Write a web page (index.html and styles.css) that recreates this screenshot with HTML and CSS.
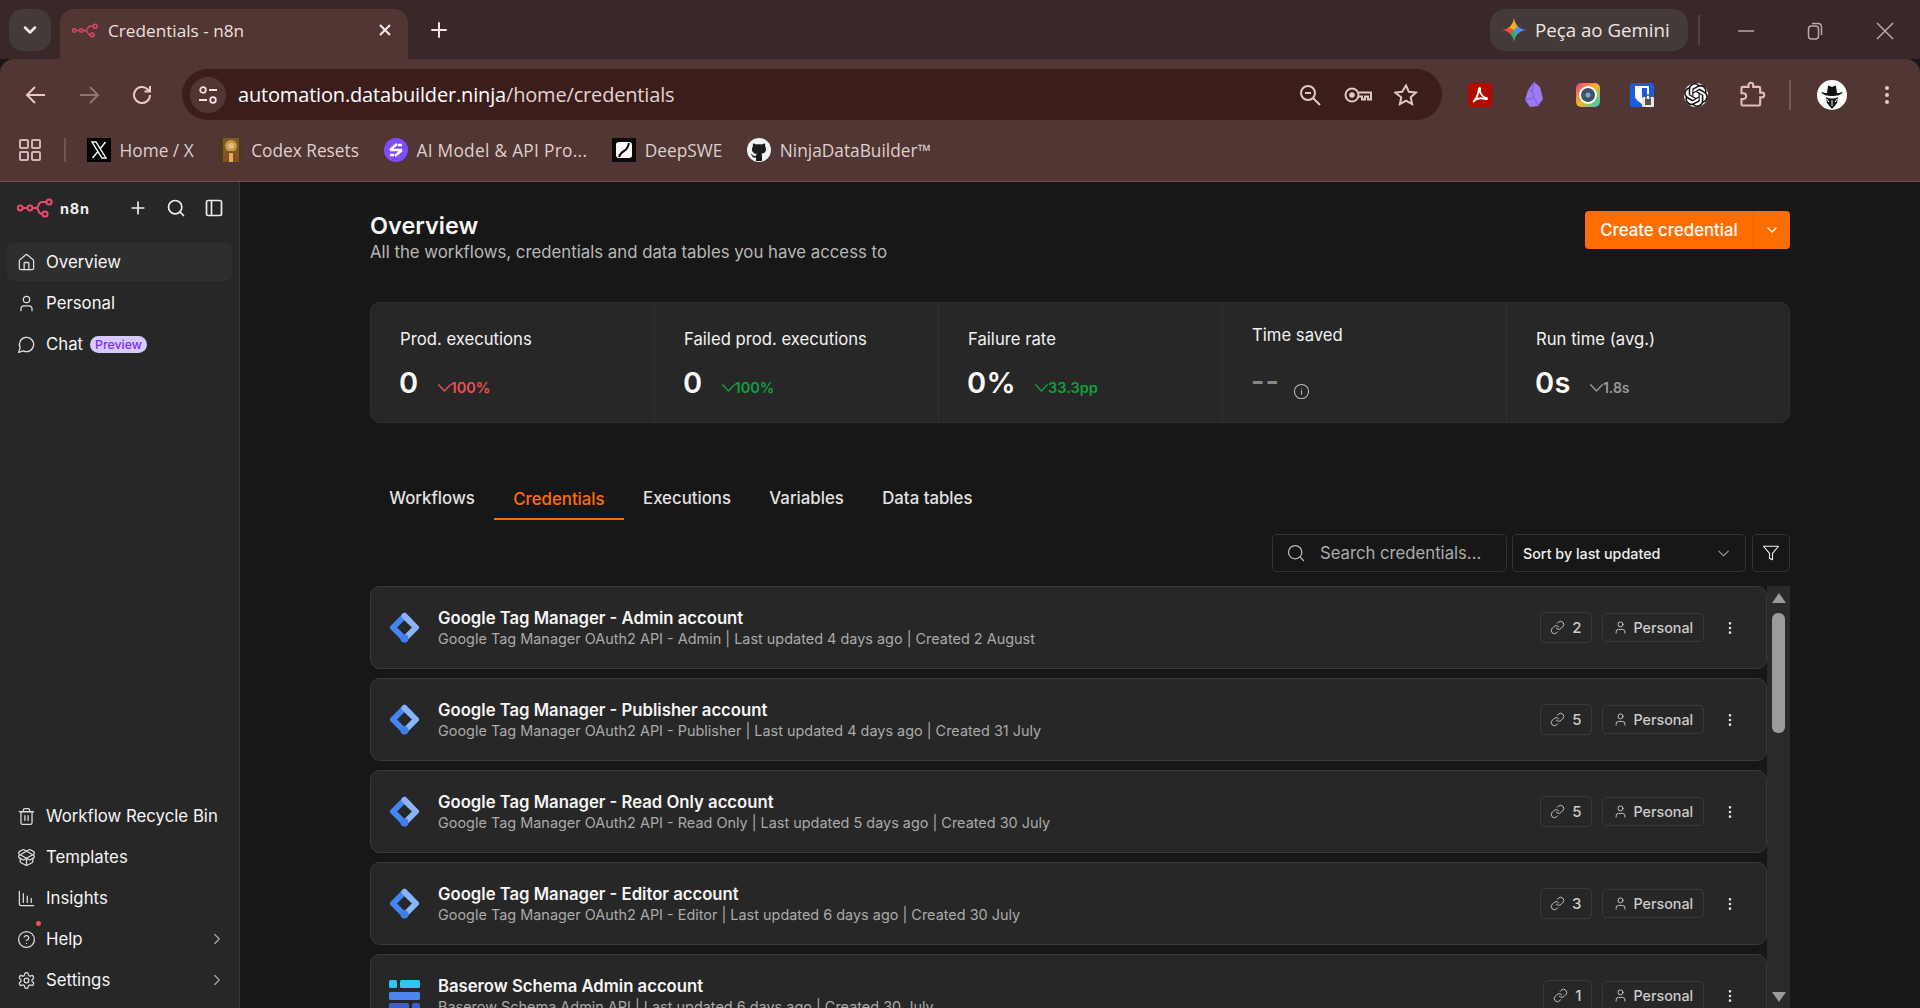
FILE: index.html
```html
<!DOCTYPE html>
<html lang="en">
<head>
<meta charset="utf-8">
<title>Credentials - n8n</title>
<link rel="stylesheet" href="styles.css">
</head>
<body>
<svg class="sprite" aria-hidden="true">
  <symbol id="n8n" viewBox="0 0 36 20"><g fill="none" stroke="currentColor" stroke-width="2"><circle cx="3.2" cy="10" r="2.4"/><circle cx="13" cy="10" r="2.4"/><circle cx="32" cy="4" r="2.6"/><circle cx="28" cy="16" r="2.6"/><path d="M5.6 10h5M15.4 10h3.2c2 0 2.4-1 3-3 .6-2 1.4-3 3.4-3h4.4M18.6 10c2 0 2.400 1 3 3 .6 2 1.600 3 3.800 3"/></g></symbol>
  <symbol id="i-home" viewBox="0 0 24 24"><path d="M15 21v-8a1 1 0 0 0-1-1h-4a1 1 0 0 0-1 1v8"/><path d="M3 10a2 2 0 0 1 .709-1.528l7-5.999a2 2 0 0 1 2.582 0l7 5.999A2 2 0 0 1 21 10v9a2 2 0 0 1-2 2H5a2 2 0 0 1-2-2z"/></symbol>
  <symbol id="i-user" viewBox="0 0 24 24"><path d="M19 21v-2a4 4 0 0 0-4-4H9a4 4 0 0 0-4 4v2"/><circle cx="12" cy="7" r="4"/></symbol>
  <symbol id="i-chat" viewBox="0 0 24 24"><path d="M7.900 20A9 9 0 1 0 4 16.100L2 22Z"/></symbol>
  <symbol id="i-trash" viewBox="0 0 24 24"><path d="M3 6h18M19 6v14c0 1-1 2-2 2H7c-1 0-2-1-2-2V6M8 6V4c0-1 1-2 2-2h4c1 0 2 1 2 2v2M10 11v6M14 11v6"/></symbol>
  <symbol id="i-box" viewBox="0 0 24 24"><path d="M12 22v-9"/><path d="M15.170 2.210a1.670 1.670 0 0 1 1.630 0L21 4.570a1.930 1.930 0 0 1 0 3.360L8.820 14.790a1.655 1.655 0 0 1-1.640 0L3 12.430a1.930 1.930 0 0 1 0-3.360z"/><path d="M20 13v3.870a2.060 2.060 0 0 1-1.110 1.830l-6 3.080a1.930 1.930 0 0 1-1.780 0l-6-3.080A2.060 2.060 0 0 1 4 16.870V13"/><path d="M21 12.430a1.930 1.930 0 0 0 0-3.360L8.830 2.200a1.640 1.640 0 0 0-1.630 0L3 4.570a1.930 1.930 0 0 0 0 3.360l12.180 6.860a1.636 1.636 0 0 0 1.630 0z"/></symbol>
  <symbol id="i-chart" viewBox="0 0 24 24"><path d="M3 3v16a2 2 0 0 0 2 2h16M8 17V6M13 17v-8M18 17v-5"/></symbol>
  <symbol id="i-help" viewBox="0 0 24 24"><circle cx="12" cy="12" r="10"/><path d="M9.090 9a3 3 0 0 1 5.830 1c0 2-3 3-3 3M12 17h.01"/></symbol>
  <symbol id="i-gear" viewBox="0 0 24 24"><path d="M12.220 2h-.44a2 2 0 0 0-2 2v.18a2 2 0 0 1-1 1.730l-.43.25a2 2 0 0 1-2 0l-.15-.08a2 2 0 0 0-2.730.73l-.22.38a2 2 0 0 0 .73 2.730l.15.1a2 2 0 0 1 1 1.720v.51a2 2 0 0 1-1 1.740l-.15.09a2 2 0 0 0-.73 2.730l.22.38a2 2 0 0 0 2.730.73l.15-.08a2 2 0 0 1 2 0l.43.25a2 2 0 0 1 1 1.730V20a2 2 0 0 0 2 2h.44a2 2 0 0 0 2-2v-.18a2 2 0 0 1 1-1.730l.43-.25a2 2 0 0 1 2 0l.15.08a2 2 0 0 0 2.730-.73l.22-.39a2 2 0 0 0-.73-2.730l-.15-.08a2 2 0 0 1-1-1.740v-.5a2 2 0 0 1 1-1.740l.15-.09a2 2 0 0 0 .73-2.730l-.22-.38a2 2 0 0 0-2.730-.73l-.15.08a2 2 0 0 1-2 0l-.43-.25a2 2 0 0 1-1-1.730V4a2 2 0 0 0-2-2z"/><circle cx="12" cy="12" r="3"/></symbol>
  <symbol id="i-right" viewBox="0 0 24 24"><path d="m9 18 6-6-6-6"/></symbol>
  <symbol id="i-down" viewBox="0 0 24 24"><path d="m6 9 6 6 6-6"/></symbol>
  <symbol id="i-vee" viewBox="0 0 13 8"><path d="M.7.7 6.500 7 12.300.7"/></symbol>
  <symbol id="i-plus" viewBox="0 0 24 24"><path d="M5 12h14M12 5v14"/></symbol>
  <symbol id="i-search" viewBox="0 0 24 24"><circle cx="11" cy="11" r="8"/><path d="m21 21-4.300-4.300"/></symbol>
  <symbol id="i-panel" viewBox="0 0 24 24"><rect x="3" y="3" width="18" height="18" rx="2"/><path d="M9 3v18"/></symbol>
  <symbol id="i-funnel" viewBox="0 0 24 24"><path d="M22 3H2l8 9.460V19l4 2v-8.540z"/></symbol>
  <symbol id="i-link" viewBox="0 0 24 24"><path d="M10 13a5 5 0 0 0 7.540.54l3-3a5 5 0 0 0-7.070-7.070l-1.720 1.710"/><path d="M14 11a5 5 0 0 0-7.540-.54l-3 3a5 5 0 0 0 7.070 7.070l1.710-1.710"/></symbol>
  <symbol id="i-dots" viewBox="0 0 24 24"><circle cx="12" cy="5" r="1"/><circle cx="12" cy="12" r="1"/><circle cx="12" cy="19" r="1"/></symbol>
  <symbol id="i-info" viewBox="0 0 24 24"><circle cx="12" cy="12" r="10"/><path d="M12 16v-5M12 8h.01"/></symbol>
  <symbol id="gtm" viewBox="0 0 31 31"><path d="M15.500 4 27 15.500 15.500 27" fill="none" stroke="#8ab4f8" stroke-width="6" stroke-linejoin="round" stroke-linecap="round"/><path d="M15.500 4 4 15.500 15.500 27" fill="none" stroke="#4285f4" stroke-width="6" stroke-linejoin="round" stroke-linecap="round"/><path d="M15.500 4 21 9.500" fill="none" stroke="#8ab4f8" stroke-width="6" stroke-linecap="round"/><circle cx="15.500" cy="26.500" r="4" fill="#3f7fe8"/></symbol>
</svg>

<div class="app">
  <header class="tabstrip">
    <button class="tab-menu"><svg class="ic ic-strong" width="20" height="20"><use href="#i-down"/></svg></button>
    <div class="tab">
      <svg class="tab-fav" width="26" height="15"><use href="#n8n"/></svg>
      <span class="tab-title">Credentials - n8n</span>
      <svg class="tab-close" width="12" height="12" viewBox="0 0 12 12"><path d="m1 1 10 10M11 1 1 11"/></svg>
    </div>
    <svg class="ic new-tab" width="24" height="24"><use href="#i-plus"/></svg>
    <div class="tab-spacer"></div>
    <div class="gemini">
      <span class="gem-star"></span>
      <span class="gem-label">Peça ao Gemini</span>
    </div>
    <span class="win-sep"></span>
    <div class="win-btns">
      <svg width="16" height="16" viewBox="0 0 16 16"><path d="M0 8h16"/></svg>
      <svg width="16" height="20" viewBox="0 0 16 20"><rect x="1.500" y="5" width="10" height="13" rx="3"/><path d="M5 2.500h6c2 0 3.500 1.500 3.500 3.500v8"/></svg>
      <svg width="18" height="18" viewBox="0 0 18 18"><path d="m1 1 16 16M17 1 1 17"/></svg>
    </div>
  </header>

  <div class="toolbar">
    <div class="nav-row">
      <div class="nav-btns">
        <svg class="nav-ic" width="24" height="24" viewBox="0 0 24 24"><path d="M21 12H4M11 4l-8 8 8 8"/></svg>
        <svg class="nav-ic nav-off" width="24" height="24" viewBox="0 0 24 24"><path d="M3 12h17M13 4l8 8-8 8"/></svg>
        <svg class="nav-ic" width="24" height="24" viewBox="0 0 24 24"><path d="M20 12a8 8 0 1 1-2.400-5.700L20 8.500M20 3v5.500h-5.500"/></svg>
      </div>
      <div class="omnibox">
        <span class="site-btn"><svg width="20" height="20" viewBox="0 0 20 20"><circle cx="5" cy="5" r="2.800"/><path d="M11 5h8M1 15h8"/><circle cx="15" cy="15" r="2.800"/></svg></span>
        <span class="url"><b>automation.databuilder.ninja</b>/home/credentials</span>
        <div class="omni-icons">
          <svg width="24" height="24" viewBox="0 0 24 24"><circle cx="10" cy="10" r="7"/><path d="M7 10h6M15 15l7 7"/></svg>
          <svg width="28" height="24" viewBox="0 0 28 24"><circle cx="8" cy="12" r="6.500"/><circle cx="8" cy="12" r="1.800" class="fill"/><path d="M14.500 9.500H27v7h-3v-3h-3v3h-3v-3h-3.500"/></svg>
          <svg width="24" height="24" viewBox="0 0 24 24"><path d="m12 2.500 2.900 6.300 6.900.8-5.100 4.700 1.400 6.800-6.100-3.400-6.100 3.400 1.400-6.800L1.200 9.600l6.900-.8z"/></svg>
        </div>
      </div>
      <div class="ext-row">
        <svg width="24" height="24" viewBox="0 0 24 24"><rect width="24" height="24" rx="3" fill="#b30b00"/><path d="M5 19c3-2 5-7 6-13 .3-2 1.700-1 1 1-.6 2 2 7 6 8 2 .4 1 1.800-1 1-3-1-7-1-10 1" fill="none" stroke="#fff" stroke-width="1.800"/></svg>
        <svg class="ext-obsidian" width="18" height="25" viewBox="0 0 18 25"><path d="M9 0l6 5 3 12-5 7-8 1-5-7 3-10z" fill="#9b7cf0"/><path d="M9 0 7 9l2 7 5 8M3 8l4 1M0 18l9-2" stroke="#7a5cd6" fill="none"/></svg>
        <svg width="24" height="24" viewBox="0 0 24 24"><defs><linearGradient id="cam" x1="0" y1="0" x2="1" y2="1"><stop offset="0" stop-color="#f0388a"/><stop offset=".5" stop-color="#f5b81f"/><stop offset="1" stop-color="#22c8d8"/></linearGradient></defs><rect width="24" height="24" rx="5" fill="url(#cam)"/><circle cx="12" cy="12" r="9" fill="#fff"/><circle cx="12" cy="12" r="7" fill="#3c5468"/><circle cx="12" cy="12" r="2.500" fill="#8aa6bc"/></svg>
        <svg width="24" height="24" viewBox="0 0 24 24"><rect width="24" height="24" rx="2" fill="#175ddc"/><path d="M5 3h14v10c0 3-4 6-7 8-3-2-7-5-7-8z" fill="#fff"/><path d="M12 5h5v8c0 2-3 4-5 5.500z" fill="#175ddc"/><rect x="12" y="14" width="12" height="10" rx="1" fill="#e8e8e8"/><rect x="15" y="16" width="6" height="6" fill="#555"/><path d="M16 16v-2a2 2 0 0 1 4 0v2" fill="none" stroke="#555" stroke-width="1.300"/></svg>
        <svg width="24" height="24" viewBox="0 0 24 24"><circle cx="12" cy="12" r="12" fill="#fff"/><path fill="#111" d="M22.282 9.821a5.985 5.985 0 0 0-.516-4.910 6.046 6.046 0 0 0-6.510-2.900A6.065 6.065 0 0 0 4.981 4.180a5.985 5.985 0 0 0-3.998 2.900 6.046 6.046 0 0 0 .743 7.097 5.980 5.980 0 0 0 .510 4.911 6.051 6.051 0 0 0 6.515 2.900A5.985 5.985 0 0 0 13.260 24a6.056 6.056 0 0 0 5.772-4.206 5.990 5.990 0 0 0 3.997-2.900 6.056 6.056 0 0 0-.747-7.073zM13.260 22.430a4.476 4.476 0 0 1-2.876-1.040l.141-.081 4.779-2.758a.795.795 0 0 0 .392-.681v-6.737l2.020 1.168a.071.071 0 0 1 .038.052v5.583a4.504 4.504 0 0 1-4.494 4.494zM3.600 18.304a4.470 4.470 0 0 1-.535-3.014l.142.085 4.783 2.759a.771.771 0 0 0 .780 0l5.843-3.369v2.332a.080.080 0 0 1-.033.062L9.740 19.950a4.500 4.500 0 0 1-6.140-1.646zM2.340 7.896a4.485 4.485 0 0 1 2.366-1.973V11.600a.766.766 0 0 0 .388.676l5.815 3.355-2.020 1.168a.076.076 0 0 1-.071 0l-4.830-2.786A4.504 4.504 0 0 1 2.340 7.872zm16.597 3.855l-5.833-3.387L15.119 7.200a.076.076 0 0 1 .071 0l4.830 2.791a4.494 4.494 0 0 1-.676 8.105v-5.678a.790.790 0 0 0-.407-.667zm2.010-3.023l-.141-.085-4.774-2.782a.776.776 0 0 0-.785 0L9.409 9.230V6.897a.066.066 0 0 1 .028-.061l4.830-2.787a4.500 4.500 0 0 1 6.680 4.660zm-12.640 4.135l-2.020-1.164a.080.080 0 0 1-.038-.057V6.075a4.500 4.500 0 0 1 7.375-3.453l-.142.080L8.704 5.460a.795.795 0 0 0-.393.681zm1.097-2.365l2.602-1.500 2.607 1.500v2.999l-2.597 1.500-2.607-1.500Z"/></svg>
        <svg class="puzzle" width="28" height="28" viewBox="0 0 24 24"><path d="M4 5h5V3.500a2 2 0 0 1 4 0V5h5a1 1 0 0 1 1 1v4h1.500a2 2 0 0 1 0 4H19v6a1 1 0 0 1-1 1H4a1 1 0 0 1-1-1v-4.500h1.500a2.500 2.500 0 0 0 0-5H3V6a1 1 0 0 1 1-1z"/></svg>
        <span class="ext-sep"></span>
        <svg class="avatar" width="30" height="30" viewBox="0 0 30 30"><circle cx="15" cy="15" r="15" fill="#fff"/><path d="M4 12c3 1 5 1 6 1l1-7c2-1 3 1 4 1s2-2 4-1l1 7c1 0 3 0 6-1-2 3-6 4-11 4S6 15 4 12z" fill="#111"/><path d="M9 17c3 2 9 2 12 0l-1 6-5 6-5-6z" fill="#111"/><path d="M10 19l2 3M20 19l-2 3M15 20v6" stroke="#fff"/></svg>
        <svg class="kebab" width="24" height="24"><use href="#i-dots"/></svg>
      </div>
    </div>
    <nav class="bookmarks">
      <svg class="apps" width="24" height="24" viewBox="0 0 24 24"><rect x="2" y="2" width="8" height="8" rx="1"/><rect x="14" y="2" width="8" height="8" rx="1"/><rect x="2" y="14" width="8" height="8" rx="1"/><rect x="14" y="14" width="8" height="8" rx="1"/></svg>
      <span class="bm-sep"></span>
      <a class="bm"><svg width="24" height="24" viewBox="0 0 24 24"><rect width="24" height="24" fill="#000"/><path d="M5 4h4l10 16h-4zM18.500 4 13 11M11 13.500 5.500 20" fill="none" stroke="#fff" stroke-width="1.400"/></svg><span>Home / X</span></a>
      <a class="bm"><svg width="24" height="24" viewBox="0 0 24 24"><rect width="24" height="24" fill="#7a5a2a"/><circle cx="12" cy="8" r="6" fill="#c79a3c"/><circle cx="12" cy="8" r="3" fill="#e2b98a"/><path d="M5 24c0-8 3-11 7-11s7 3 7 11z" fill="#8c4a22"/><path d="M10 15h4v9h-4z" fill="#d8b060"/><path d="M0 0h4v24H0zM20 0h4v24h-4z" fill="#4c3a1e"/></svg><span>Codex Resets</span></a>
      <a class="bm bm-wide"><svg width="24" height="24" viewBox="0 0 24 24"><circle cx="12" cy="12" r="12" fill="#7c4dff"/><path d="M6 12 13 6M11 18l7-6M6 12h12M6 17h4M14 7h4" stroke="#fff" stroke-width="2.400" fill="none"/></svg><span>AI Model &amp; API Pro...</span></a>
      <a class="bm"><svg width="24" height="24" viewBox="0 0 24 24"><rect width="24" height="24" fill="#0a0a0a"/><rect x="4" y="4" width="16" height="16" rx="3" fill="#fff"/><path d="M17 5c-1 5-3 7-5 8s-4 3-5 6" fill="none" stroke="#0a0a0a" stroke-width="2"/></svg><span>DeepSWE</span></a>
      <a class="bm"><svg width="24" height="24" viewBox="0 0 24 24"><circle cx="12" cy="12" r="12" fill="#f2f2f2"/><path d="M9 23v-3.500c-3 .6-4-1-4.500-2.500-.3-.7-1-1.100-1-1.300 1 0 1.700.9 2.200 1.600.7 1 2 1 3.300.4.100-.9.400-1.500.8-1.900C7 15.400 5 14.300 5 10.900c0-1.100.4-2 1-2.700-.1-.3-.4-1.300.1-2.700 0 0 1-.3 3 1 1.800-.5 4-.5 5.800 0 2-1.300 3-1 3-1 .5 1.400.2 2.400.1 2.700.6.700 1 1.600 1 2.700 0 3.400-2 4.500-4.800 4.800.5.400.8 1.100.8 2.300V23z" fill="#1a1a1a"/></svg><span>NinjaDataBuilder™</span></a>
    </nav>
  </div>

  <div class="workspace">
    <aside class="sidebar">
      <div class="side-top">
        <svg class="logo" width="36" height="20"><use href="#n8n"/></svg>
        <span class="logo-text">n8n</span>
        <div class="side-actions">
          <svg class="ic" width="20" height="20"><use href="#i-plus"/></svg>
          <svg class="ic" width="20" height="20"><use href="#i-search"/></svg>
          <svg class="ic" width="20" height="20"><use href="#i-panel"/></svg>
        </div>
      </div>
      <ul class="side-menu">
        <li class="side-item is-current"><svg class="ic" width="19" height="19"><use href="#i-home"/></svg><span>Overview</span></li>
        <li class="side-item"><svg class="ic" width="19" height="19"><use href="#i-user"/></svg><span>Personal</span></li>
        <li class="side-item"><svg class="ic" width="19" height="19"><use href="#i-chat"/></svg><span>Chat</span><em class="preview">Preview</em></li>
      </ul>
      <ul class="side-menu side-bottom">
        <li class="side-item"><svg class="ic" width="19" height="19"><use href="#i-trash"/></svg><span>Workflow Recycle Bin</span></li>
        <li class="side-item"><svg class="ic" width="19" height="19"><use href="#i-box"/></svg><span>Templates</span></li>
        <li class="side-item"><svg class="ic" width="19" height="19"><use href="#i-chart"/></svg><span>Insights</span></li>
        <li class="side-item has-dot"><svg class="ic" width="19" height="19"><use href="#i-help"/></svg><span>Help</span><svg class="ic chev" width="18" height="18"><use href="#i-right"/></svg></li>
        <li class="side-item"><svg class="ic" width="19" height="19"><use href="#i-gear"/></svg><span>Settings</span><svg class="ic chev" width="18" height="18"><use href="#i-right"/></svg></li>
      </ul>
    </aside>

    <main class="main">
      <div class="page-head">
        <div>
          <h1>Overview</h1>
          <p>All the workflows, credentials and data tables you have access to</p>
        </div>
        <div class="create">
          <span class="create-label">Create credential</span>
          <span class="create-more"><svg class="ic" width="16" height="16"><use href="#i-down"/></svg></span>
        </div>
      </div>

      <section class="stats">
        <div class="stat"><div class="stat-label">Prod. executions</div><div class="stat-row"><span class="stat-val">0</span><span class="delta bad"><svg class="ic" width="13" height="8"><use href="#i-vee"/></svg>100%</span></div></div>
        <div class="stat"><div class="stat-label">Failed prod. executions</div><div class="stat-row"><span class="stat-val">0</span><span class="delta good"><svg class="ic" width="13" height="8"><use href="#i-vee"/></svg>100%</span></div></div>
        <div class="stat"><div class="stat-label">Failure rate</div><div class="stat-row"><span class="stat-val">0%</span><span class="delta good"><svg class="ic" width="13" height="8"><use href="#i-vee"/></svg>33.3pp</span></div></div>
        <div class="stat stat-empty"><div class="stat-label">Time saved</div><div class="stat-row"><span class="stat-val dash">--</span><svg class="ic info" width="17" height="17"><use href="#i-info"/></svg></div></div>
        <div class="stat"><div class="stat-label">Run time (avg.)</div><div class="stat-row"><span class="stat-val">0s</span><span class="delta neutral"><svg class="ic" width="13" height="8"><use href="#i-vee"/></svg>1.8s</span></div></div>
      </section>

      <div class="tabs">
        <a class="page-tab">Workflows</a>
        <a class="page-tab is-active">Credentials</a>
        <a class="page-tab">Executions</a>
        <a class="page-tab">Variables</a>
        <a class="page-tab">Data tables</a>
      </div>

      <div class="filters">
        <div class="search"><svg class="ic" width="20" height="20"><use href="#i-search"/></svg><span>Search credentials...</span></div>
        <div class="sort"><span>Sort by last updated</span><svg class="ic" width="19" height="19"><use href="#i-down"/></svg></div>
        <div class="filter-btn"><svg class="ic" width="18" height="18"><use href="#i-funnel"/></svg></div>
      </div>

      <div class="list-wrap">
        <div class="cards">
          <article class="card">
            <svg class="card-ic" width="31" height="31"><use href="#gtm"/></svg>
            <div class="card-text"><h2>Google Tag Manager - Admin account</h2><p>Google Tag Manager OAuth2 API - Admin | Last updated 4 days ago | Created 2 August</p></div>
            <span class="link-badge"><svg class="ic" width="15" height="15"><use href="#i-link"/></svg>2</span>
            <span class="owner"><svg class="ic" width="15" height="15"><use href="#i-user"/></svg>Personal</span>
            <svg class="ic dots" width="16" height="16"><use href="#i-dots"/></svg>
          </article>
          <article class="card">
            <svg class="card-ic" width="31" height="31"><use href="#gtm"/></svg>
            <div class="card-text"><h2>Google Tag Manager - Publisher account</h2><p>Google Tag Manager OAuth2 API - Publisher | Last updated 4 days ago | Created 31 July</p></div>
            <span class="link-badge"><svg class="ic" width="15" height="15"><use href="#i-link"/></svg>5</span>
            <span class="owner"><svg class="ic" width="15" height="15"><use href="#i-user"/></svg>Personal</span>
            <svg class="ic dots" width="16" height="16"><use href="#i-dots"/></svg>
          </article>
          <article class="card">
            <svg class="card-ic" width="31" height="31"><use href="#gtm"/></svg>
            <div class="card-text"><h2>Google Tag Manager - Read Only account</h2><p>Google Tag Manager OAuth2 API - Read Only | Last updated 5 days ago | Created 30 July</p></div>
            <span class="link-badge"><svg class="ic" width="15" height="15"><use href="#i-link"/></svg>5</span>
            <span class="owner"><svg class="ic" width="15" height="15"><use href="#i-user"/></svg>Personal</span>
            <svg class="ic dots" width="16" height="16"><use href="#i-dots"/></svg>
          </article>
          <article class="card">
            <svg class="card-ic" width="31" height="31"><use href="#gtm"/></svg>
            <div class="card-text"><h2>Google Tag Manager - Editor account</h2><p>Google Tag Manager OAuth2 API - Editor | Last updated 6 days ago | Created 30 July</p></div>
            <span class="link-badge"><svg class="ic" width="15" height="15"><use href="#i-link"/></svg>3</span>
            <span class="owner"><svg class="ic" width="15" height="15"><use href="#i-user"/></svg>Personal</span>
            <svg class="ic dots" width="16" height="16"><use href="#i-dots"/></svg>
          </article>
          <article class="card">
            <svg class="card-ic" width="31" height="31" viewBox="0 0 31 31"><rect y="0" width="8" height="8" rx="1.500" fill="#2fc5f5"/><rect x="11" y="0" width="20" height="8" rx="1.500" fill="#2fc5f5"/><rect y="12" width="31" height="8" rx="1.500" fill="#4e86f0"/><rect y="23" width="20" height="8" rx="1.500" fill="#3f5fc4"/><rect x="23" y="23" width="8" height="8" rx="1.500" fill="#3f5fc4"/></svg>
            <div class="card-text"><h2>Baserow Schema Admin account</h2><p>Baserow Schema Admin API | Last updated 6 days ago | Created 30 July</p></div>
            <span class="link-badge"><svg class="ic" width="15" height="15"><use href="#i-link"/></svg>1</span>
            <span class="owner"><svg class="ic" width="15" height="15"><use href="#i-user"/></svg>Personal</span>
            <svg class="ic dots" width="16" height="16"><use href="#i-dots"/></svg>
          </article>
        </div>
        <div class="scrollbar">
          <span class="arrow-up"></span>
          <span class="thumb"></span>
          <span class="arrow-down"></span>
        </div>
      </div>
    </main>
  </div>
</div>
</body>
</html>
```
FILE: styles.css
```css
* { box-sizing: border-box; }
html, body { margin: 0; height: 100%; overflow: hidden; }
body { font-family: Inter, "Liberation Sans", sans-serif; background: #171717; color: #f5f5f5; }
.sprite { position: absolute; width: 0; height: 0; }
.ic { fill: none; stroke: currentColor; stroke-width: 2; stroke-linecap: round; stroke-linejoin: round; flex: none; }
h1, h2, p, ul { margin: 0; padding: 0; }
ul { list-style: none; }

.app { display: flex; flex-direction: column; height: 100vh; }

/* browser chrome */
.tabstrip { height: 59px; background: #3a2727; display: flex; align-items: flex-start; padding-top: 9px; padding-left: 9px; font-family: "Open Sans", sans-serif; flex: none; }
.tab-menu { width: 42px; height: 42px; border: 0; border-radius: 14px; background: #443a39; color: #f2e6e4; display: flex; align-items: center; justify-content: center; padding: 0; }
.ic-strong { stroke-width: 3; }
.tab { width: 348px; height: 50px; margin-left: 9px; padding: 0 12px 8px; background: #513633; border-radius: 14px 14px 0 0; display: flex; align-items: center; }
.tab-fav { color: #d8486c; flex: none; }
.tab-title { margin-left: 10px; font-size: 17.200px; color: #ece0de; flex: 1; }
.tab-close { fill: none; stroke: #f5ebe9; stroke-width: 2; margin-right: 5px; flex: none; }
.new-tab { color: #f2e6e4; margin: 9px 0 0 19px; }
.tab-spacer { flex: 1; }
.gemini { width: 198px; height: 42px; padding-left: 12px; border-radius: 15px; background: #443a39; display: flex; align-items: center; gap: 9px; font-size: 18.700px; color: #f2e6e4; white-space: nowrap; }
.gem-label { padding-bottom: 2px; }
.gem-star { width: 24px; height: 24px; flex: none; background: conic-gradient(from 315deg, #f6b21c 0 20%, #4a8ff5 30% 45%, #2fb5a0 55%, #35b05a 65%, #e8503f 80%, #e8503f 90%, #f6b21c 100%); clip-path: path("M12 0c1 7 5 11 12 12-7 1-11 5-12 12-1-7-5-11-12-12 7-1 11-5 12-12z"); }
.win-sep { width: 2px; height: 30px; margin: 6px 0 0 10px; background: #55423f; }
.win-btns { width: 220px; padding: 12px 26px 0 38px; display: flex; align-items: center; justify-content: space-between; }
.win-btns svg { fill: none; stroke: #b9aaa8; stroke-width: 1.500; }

.toolbar { height: 123px; background: #513633; border-radius: 14px 14px 0 0; border-bottom: 1px solid #6a5350; flex: none; font-family: "Open Sans", sans-serif; }
.nav-row { display: flex; align-items: center; height: 51px; margin-top: 10px; }
.nav-btns { width: 182px; padding: 0 24px; display: flex; gap: 29px; }
.nav-ic { fill: none; stroke: #ecc9c2; stroke-width: 2; flex: none; }
.nav-off { stroke: #8f7470; }
.omnibox { width: 1260px; height: 51px; border-radius: 26px; background: #3b1e1c; display: flex; align-items: center; padding: 0 24px 0 8px; }
.site-btn { width: 36px; height: 36px; border-radius: 50%; background: #513633; display: flex; align-items: center; justify-content: center; flex: none; }
.site-btn svg { fill: none; stroke: #f2e3e0; stroke-width: 1.800; }
.url { margin-left: 12px; font-size: 20px; color: #e3d3d0; flex: 1; letter-spacing: -.17px; }
.url b { font-weight: 400; color: #fff; }
.omni-icons { display: flex; align-items: center; gap: 22px; }
.omni-icons svg { fill: none; stroke: #ddcac6; stroke-width: 2; }
.omni-icons .fill { fill: #ddcac6; }
.ext-row { flex: 1; display: flex; align-items: center; padding-left: 26px; }
.ext-row svg { flex: none; margin-right: 30px; }
.ext-row .ext-obsidian { margin-left: 3px; margin-right: 33px; }
.ext-row .puzzle { fill: none; stroke: #e4bdb6; stroke-width: 1.800; margin-right: 23px; }
.ext-sep { width: 2px; height: 30px; background: #745a56; margin-right: 26px; }
.ext-row .avatar { margin-right: 28px; }
.ext-row .kebab { fill: #ecc9c2; stroke: #ecc9c2; stroke-width: 2; margin-right: 0; }

.bookmarks { display: flex; align-items: center; height: 40px; margin-top: 10px; padding-left: 18px; font-size: 17.300px; color: #ddd0cd; }
.apps { fill: none; stroke: #ccb9b5; stroke-width: 2; flex: none; }
.bm-sep { width: 2px; height: 24px; margin: 0 21px 0 22px; background: #6f5653; flex: none; }
.bm { display: flex; align-items: center; gap: 8.500px; margin-right: 25px; white-space: nowrap; }
.bm svg { flex: none; }
.bm-wide { letter-spacing: .3px; }

/* workspace */
.workspace { flex: 1; display: flex; min-height: 0; }
.sidebar { width: 240px; background: #272727; border-right: 1px solid #3a3a3a; display: flex; flex-direction: column; flex: none; padding: 0 7px; }
.side-top { display: flex; align-items: center; height: 52px; padding-left: 10px; }
.logo { color: #ea4b71; flex: none; }
.logo-text { margin-left: 7px; font-size: 14.500px; font-weight: 700; letter-spacing: .8px; color: #eee; }
.side-actions { margin-left: auto; display: flex; gap: 18px; padding-right: 8px; color: #eee; }
.side-menu { display: flex; flex-direction: column; gap: 3px; margin-top: 9px; }
.side-item { height: 38px; display: flex; align-items: center; gap: 10px; padding-left: 10px; font-size: 16.800px; color: #f5f5f5; border-radius: 6px; position: relative; }
.side-item .ic { stroke-width: 1.600; color: #ddd; }
.is-current { background: #2e2e2e; }
.side-item .preview { margin-left: -3px; font-style: normal; font-size: 12.300px; padding: 0 5px; height: 17px; line-height: 17px; border-radius: 9px; background: #d8c9ff; color: #7a2ff0; font-weight: 500; }
.side-menu.side-bottom { margin-top: auto; margin-bottom: 9px; }
.side-item .chev { margin-left: auto; margin-right: 6px; color: #aaa; }
.has-dot::after { content: ""; position: absolute; left: 29px; top: 1px; width: 5px; height: 5px; border-radius: 50%; background: #f0535c; }

.main { flex: 1; min-width: 0; padding: 29px 130px 0; display: flex; flex-direction: column; overflow: hidden; }
.page-head { display: flex; justify-content: space-between; align-items: flex-start; height: 51px; margin-bottom: 40px; flex: none; }
.page-head h1 { font-size: 23.500px; font-weight: 600; line-height: 30px; color: #f5f5f5; }
.page-head p { font-size: 16.800px; line-height: 20px; margin-top: 1px; color: #b8b8b8; }
.create { height: 38px; display: flex; background: #ff6d00; border-radius: 4px; color: #fff; font-size: 16.800px; font-weight: 500; align-items: center; }
.create-label { width: 168px; text-align: center; }
.create-more { width: 37px; height: 38px; border-left: 1px solid #e96400; display: flex; align-items: center; justify-content: center; }

.stats { height: 121px; display: grid; grid-template-columns: 284px 284px 284px 284px 1fr; background: #272727; border: 1px solid #303030; border-radius: 10px; flex: none; }
.stat { padding-left: 29px; border-right: 1px solid #303030; padding-top: 25px; }
.stat:last-child { border-right: 0; }
.stat-label { font-size: 16.700px; line-height: 22px; color: #f2f2f2; }
.stat-row { display: flex; align-items: flex-start; margin-top: 15px; height: 36px; }
.stat-val { font-size: 29px; font-weight: 600; line-height: 36px; margin-left: -1px; letter-spacing: .4px; flex: none; color: #fafafa; }
.delta { margin: 14px 0 0 19px; font-size: 14.500px; font-weight: 600; display: inline-flex; align-items: center; }
.delta .ic { stroke-width: 1.300; }
.bad { color: #f05050; }
.good { color: #10a03c; }
.neutral { color: #9a9a9a; font-size: 14px; }
.stat-empty { padding-top: 21px; }
.stat-empty .stat-row { margin-top: 17px; }
.dash { color: #888; letter-spacing: 1px; }
.info { color: #bbb; stroke-width: 1.500; margin: 20px 0 0 13px; }

.tabs { display: flex; height: 40px; margin-top: 57px; flex: none; }
.page-tab { padding: 0 19.200px; font-size: 16.800px; font-weight: 500; line-height: 36px; color: #e2e2e2; white-space: nowrap; }
.is-active { color: #ff6d00; line-height: 38px; border-bottom: 2px solid #ff6d00; }

.filters { display: flex; justify-content: flex-end; gap: 5px; margin-top: 14px; height: 38px; flex: none; }
.search, .sort, .filter-btn { height: 38px; border: 1px solid #333; border-radius: 5px; display: flex; align-items: center; background: #171717; }
.search { width: 235px; padding-left: 13px; gap: 14px; font-size: 16.700px; color: #ababab; }
.search .ic { color: #bbb; stroke-width: 1.500; }
.sort { width: 234px; padding: 0 12px 0 10px; justify-content: space-between; font-size: 14.300px; font-weight: 500; color: #f0f0f0; }
.sort .ic { color: #999; stroke-width: 1.500; }
.filter-btn { width: 38px; margin-left: 1px; justify-content: center; color: #eee; }
.filter-btn .ic { stroke-width: 1.500; }

.list-wrap { flex: 1; min-height: 0; display: flex; margin-top: 14px; }
.cards { flex: 1; min-width: 0; display: flex; flex-direction: column; gap: 9.100px; }
.card { height: 83px; flex: none; background: #272727; border: 1px solid #3a3a3a; border-radius: 10px; display: flex; align-items: center; padding-left: 18px; }
.card-ic { flex: none; }
.card-text { margin-left: 18px; flex: 1; min-width: 0; }
.card-text h2 { font-size: 16.700px; font-weight: 600; line-height: 21px; color: #f5f5f5; }
.card-text p { font-size: 14.440px; line-height: 19px; color: #aaa; white-space: nowrap; }
.link-badge, .owner { display: flex; align-items: center; border: 1px solid #3a3a3a; border-radius: 5px; font-size: 14.300px; color: #ccc; font-weight: 500; flex: none; }
.link-badge { height: 31px; padding: 0 9px; gap: 7px; font-size: 15px; }
.owner { height: 29px; width: 102px; margin-left: 10px; padding-left: 10px; gap: 6px; }
.link-badge .ic, .owner .ic { stroke-width: 1.500; }
.dots { margin: 0 28px 0 18.500px; fill: #ddd; color: #ddd; }

.scrollbar { width: 23px; background: #2a2a2a; position: relative; flex: none; display: flex; flex-direction: column; align-items: flex-start; padding-left: 5px; }
.thumb { width: 13px; height: 120px; margin-top: 10px; border-radius: 6px; background: #9b9b9b; }
.arrow-up { margin-top: 7px; width: 0; height: 0; border-left: 7px solid transparent; border-right: 7px solid transparent; border-bottom: 10px solid #9b9b9b; }
.arrow-down { position: absolute; left: 5px; bottom: 6px; width: 0; height: 0; border-left: 7px solid transparent; border-right: 7px solid transparent; border-top: 10px solid #9b9b9b; }
```
